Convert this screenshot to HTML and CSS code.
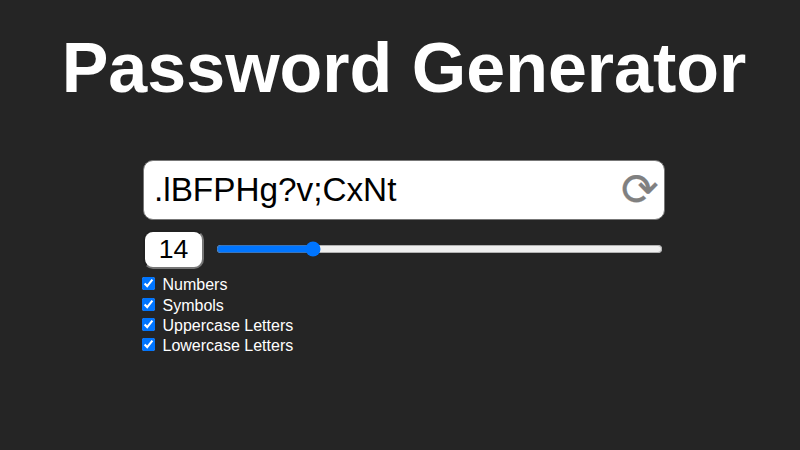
FILE: index.html
```html
<!DOCTYPE html>
<html lang="en">
<head>
<meta charset="utf-8">
<title>Password Generator</title>
<link rel="stylesheet" href="styles.css">
</head>
<body>
<h1>Password Generator</h1>
<main class="panel">
  <div class="password">
    <span class="value">.lBFPHg?v;CxNt</span>
    <span class="refresh">⟳</span>
  </div>
  <div class="length">
    <input class="count" type="text" value="14">
    <input class="slider" type="range" min="1" max="64" value="14">
  </div>
  <label class="option"><input type="checkbox" checked>Numbers</label>
  <label class="option"><input type="checkbox" checked>Symbols</label>
  <label class="option"><input type="checkbox" checked>Uppercase Letters</label>
  <label class="option"><input type="checkbox" checked>Lowercase Letters</label>
</main>
</body>
</html>
```
FILE: styles.css
```css
* { box-sizing: border-box; }
body {
  margin: 0;
  padding: 28px 0 0 8px;
  background: #252525;
  color: #fff;
  font-family: "Liberation Sans", Arial, sans-serif;
  font-size: 16px;
  overflow: hidden;
}
h1 {
  margin: 0;
  font-size: 70px;
  line-height: 80px;
  text-align: center;
  white-space: nowrap;
}
.panel { width: 522px; margin: 52px 0 0 135px; }
.password {
  display: flex;
  align-items: center;
  justify-content: space-between;
  height: 60px;
  padding: 0 5.5px 0 10px;
  border: 1px solid #777;
  border-radius: 10px;
  background: #fff;
  color: #000;
  font-size: 33.3px;
}
.refresh { color: #808080; font-size: 45.3px; line-height: 58px; -webkit-text-stroke: 0.25px #808080; }
.length { display: flex; align-items: center; height: 55.4px; padding-top: 4px; }
.count {
  width: 61px;
  height: 39px;
  padding: 1px 2px;
  border: 2px inset #767676;
  border-radius: 10px;
  background: #fff;
  color: #000;
  font: 26.6px "Liberation Sans", Arial, sans-serif;
  text-align: center;
}
.slider { width: 447px; margin: 0 0 1px 12px; }
.option { display: flex; align-items: center; height: 20.2px; }
.option input { margin: 0 7.5px 3px -1px; }
```
